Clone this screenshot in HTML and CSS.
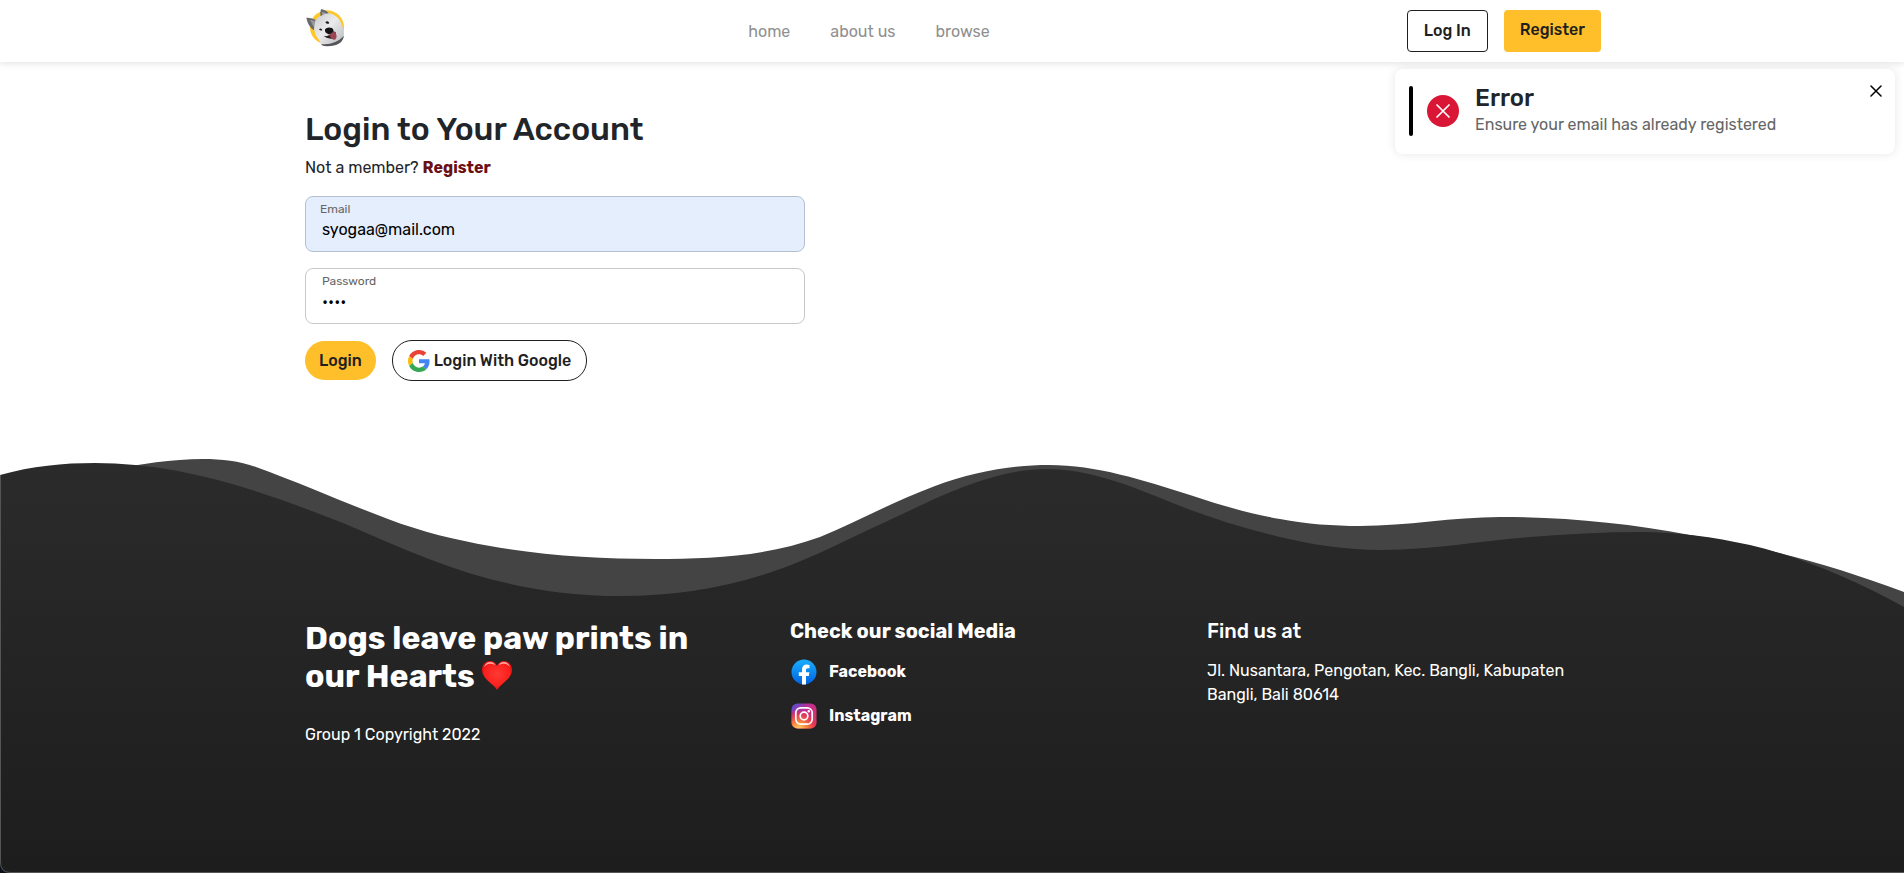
FILE: index.html
```html
<!DOCTYPE html>
<html lang="en">
<head>
<meta charset="utf-8">
<meta name="viewport" content="width=device-width, initial-scale=1">
<title>Login</title>
<link rel="stylesheet" href="styles.css">
</head>
<body>
<header class="navbar">
  <div class="container navbar-inner">
    <a class="brand" href="#" aria-label="Home">
      <svg class="brand-logo" viewBox="45 21 126 144" aria-hidden="true">
        <defs>
          <linearGradient id="fur" x1="0" y1="0" x2="1" y2="1">
            <stop offset="0" stop-color="#c9cacc"/><stop offset=".45" stop-color="#ebebed"/><stop offset="1" stop-color="#b4b5b8"/>
          </linearGradient>
        </defs>
        <circle cx="111" cy="82" r="51" fill="#fdc727"/>
        <path d="M49 53Q62 52 78 60L72 91Q54 80 49 53Z" fill="#68696c"/>
        <path d="M60 59 75 63 71 82Z" fill="#97989b"/>
        <path d="M93 27Q110 30 118 42L92 52Q89 38 93 27Z" fill="#68696c"/>
        <path d="M97 35Q107 38 111 44L96 50Z" fill="#a0a1a4"/>
        <path d="M76 62Q84 49 98 46Q112 36 128 43Q148 52 156 76Q165 98 160 112Q144 134 96 138Q88 118 77 105Q68 83 76 62Z" fill="url(#fur)"/>
        <path d="M93 132Q132 137 162 108Q157 138 112 139Q98 140 93 132Z" fill="#55565a"/>
        <path d="M106 67Q113 59 118 69Q112 75 106 67Z" fill="#161616"/>
        <path d="M87 88Q93 82 97 90Q92 94 87 88Z" fill="#161616"/>
        <path d="M105 88Q112 79 126 84Q135 92 126 99Q119 105 113 101Q104 99 105 88Z" fill="#141414"/>
        <path d="M101 109Q120 110 129 94L137 96Q139 112 128 117Q112 117 101 109Z" fill="#2c2023"/>
        <path d="M118 105Q128 94 136 97Q144 113 135 119Q125 121 118 105Z" fill="#9c4452"/>
      </svg>
    </a>
    <nav class="nav-links">
      <a href="#">home</a>
      <a href="#">about us</a>
      <a href="#">browse</a>
    </nav>
    <div class="nav-actions">
      <button class="btn btn-outline" type="button">Log In</button>
      <button class="btn btn-primary" type="button">Register</button>
    </div>
  </div>
</header>

<aside class="toast" role="alert">
  <span class="toast-bar"></span>
  <svg class="toast-icon" viewBox="0 0 32 32" aria-hidden="true">
    <circle cx="16" cy="16" r="16" fill="#d91635"/>
    <path d="M10 10 22 22M22 10 10 22" stroke="#fff" stroke-width="1.700" stroke-linecap="round"/>
  </svg>
  <div class="toast-text">
    <h2>Error</h2>
    <p>Ensure your email has already registered</p>
  </div>
  <button class="toast-close" type="button" aria-label="Close">
    <svg viewBox="0 0 12 12" aria-hidden="true"><path d="M1 1 11 11M11 1 1 11" stroke="#000" stroke-width="1.500" stroke-linecap="round"/></svg>
  </button>
</aside>

<main class="container login">
  <h1>Login to Your Account</h1>
  <p class="signup">Not a member? <a href="#">Register</a></p>
  <form class="login-form">
    <div class="field field-filled">
      <label for="email">Email</label>
      <input id="email" type="email" value="syogaa@mail.com">
    </div>
    <div class="field">
      <label for="password">Password</label>
      <input id="password" type="password" value="dogs">
    </div>
    <div class="form-actions">
      <button class="pill pill-primary" type="button">Login</button>
      <button class="pill pill-outline" type="button">
        <svg class="google" viewBox="0 0 48 48" aria-hidden="true">
          <path fill="#ea4335" d="M24 9.500c3.540 0 6.710 1.220 9.210 3.600l6.850-6.850C35.900 2.380 30.470 0 24 0 14.620 0 6.510 5.380 2.560 13.220l7.980 6.190C12.430 13.720 17.740 9.500 24 9.500z"/>
          <path fill="#4285f4" d="M46.980 24.550c0-1.570-.15-3.090-.38-4.550H24v9.020h12.940c-.58 2.960-2.260 5.480-4.780 7.180l7.730 6c4.510-4.180 7.090-10.360 7.090-17.650z"/>
          <path fill="#fbbc05" d="M10.530 28.590c-.48-1.450-.76-2.990-.76-4.590s.27-3.140.76-4.590l-7.980-6.190C.92 16.460 0 20.120 0 24c0 3.880.92 7.540 2.560 10.780l7.970-6.190z"/>
          <path fill="#34a853" d="M24 48c6.480 0 11.930-2.130 15.890-5.810l-7.730-6c-2.150 1.450-4.920 2.300-8.160 2.300-6.260 0-11.570-4.220-13.470-9.910l-7.980 6.190C6.510 42.620 14.620 48 24 48z"/>
        </svg>
        Login With Google
      </button>
    </div>
  </form>
</main>

<footer class="footer">
  <svg class="waves" viewBox="0 455 1904 418" preserveAspectRatio="none" aria-hidden="true">
    <defs>
      <linearGradient id="ground" x1="0" y1="0" x2="0" y2="1">
        <stop offset="0" stop-color="#2b2b2b"/><stop offset="1" stop-color="#1d1d1d"/>
      </linearGradient>
    </defs>
    <path fill="#444" d="M110 470C140 464 172 459 203 459C222 459 239 461 256 467C303 484 345 503 388 519C422 532 456 540 490 546C545 556 600 559 655 559C710 559 765 557 820 537C858 521 897 500 935 486C973 472 1011 465 1049 465C1096 465 1143 480 1190 495C1220 505 1250 514 1280 519C1307 524 1333 526 1360 526C1407 526 1453 517 1500 517C1563 517 1627 523 1690 535C1761 546 1833 565 1904 592V700H110Z"/>
    <path fill="#0b1119" d="M0 850H30V873H0Z"/>
    <path fill="url(#ground)" d="M0 475C32 466 63 463 95 463C149 463 204 474 258 492C286 501 315 512 343 523C372 535 400 548 429 559C493 584 556 596 620 596C681 596 742 586 803 560C825 551 846 540 868 530C889 520 909 511 930 501C969 483 1008 469 1047 469C1088 469 1129 485 1170 502C1207 517 1243 528 1280 537C1314 545 1348 550 1382 550C1431 550 1481 541 1530 537C1567 534 1603 532 1640 532C1677 532 1713 537 1750 545C1801 557 1853 579 1904 607V873H10Q0 873 0 862Z"/>
    <path fill="none" stroke="#555" d="M.5 475V862Q.5 872.500 10 872.500H1904"/>
  </svg>
  <div class="container footer-grid">
    <section>
      <h2 class="slogan">Dogs leave paw prints in our Hearts
        <svg class="heart" viewBox="0 0 30 30" role="img" aria-label="heart">
          <defs><radialGradient id="red" cx=".5" cy=".45" r=".6"><stop offset="0" stop-color="#ff3a34"/><stop offset=".7" stop-color="#fa1f1c"/><stop offset="1" stop-color="#c90d0d"/></radialGradient></defs>
          <path d="M15 29C12 23 0 18 0 9C0 3 4 0 8 0C11 0 14 2 15 5C16 2 19 0 22 0C26 0 30 3 30 9C30 18 18 23 15 29Z" fill="url(#red)"/>
          <path d="M2 6Q4 1 8 1Q12 1 13 4Q9 2 6 3Q4 4 2 6ZM17 4Q18 1 22 1Q26 1 28 6Q26 4 24 3Q21 2 17 4Z" fill="#ffa8a0"/>
        </svg>
      </h2>
      <p class="copyright">Group 1 Copyright 2022</p>
    </section>
    <section>
      <h3 class="strong">Check our social Media</h3>
      <ul class="social">
        <li><a href="#">
          <svg viewBox="-1 -1 28 28" aria-hidden="true">
            <defs><linearGradient id="fb" x1="0" y1="0" x2="0" y2="1"><stop offset="0" stop-color="#19afff"/><stop offset="1" stop-color="#0062e0"/></linearGradient></defs>
            <circle cx="13" cy="13" r="12.500" fill="url(#fb)"/>
            <path d="M11 25.400V17H7.800V13.200H11V10.600C11 7.200 13 5.600 15.800 5.600Q17.300 5.600 18.500 5.900V9.200H16.800C15.300 9.200 15 10 15 11V13.200H18.400L17.800 17H15V25.400Q13 25.700 11 25.400Z" fill="#fff"/>
          </svg>Facebook</a></li>
        <li><a href="#">
          <svg viewBox="-1 -1 28 28" aria-hidden="true">
            <defs>
              <linearGradient id="ig" x1="0" y1="0" x2="1" y2="1"><stop offset="0" stop-color="#4b50d8"/><stop offset=".4" stop-color="#c32d92"/><stop offset="1" stop-color="#e23a4e"/></linearGradient>
              <radialGradient id="glow" cx=".3" cy="1.050" r=".85"><stop offset="0" stop-color="#ffdc7a"/><stop offset=".35" stop-color="#fb8b3a"/><stop offset=".75" stop-color="#e8354f" stop-opacity=".8"/><stop offset="1" stop-color="#c32d92" stop-opacity="0"/></radialGradient>
            </defs>
            <rect x=".5" y=".5" width="25" height="25" rx="6" fill="url(#ig)"/>
            <rect x=".5" y=".5" width="25" height="25" rx="6" fill="url(#glow)"/>
            <rect x="4.800" y="4.800" width="16.400" height="16.400" rx="5" fill="none" stroke="#fff" stroke-width="1.700"/>
            <circle cx="13" cy="13" r="3.800" fill="none" stroke="#fff" stroke-width="1.700"/>
            <circle cx="17.800" cy="8.200" r="1.200" fill="#fff"/>
          </svg>Instagram</a></li>
      </ul>
    </section>
    <section>
      <h3>Find us at</h3>
      <address>Jl. Nusantara, Pengotan, Kec. Bangli, Kabupaten Bangli, Bali 80614</address>
    </section>
  </div>
</footer>
</body>
</html>
```
FILE: styles.css
```css
* {
  box-sizing: border-box;
}

body {
  margin: 0;
  min-height: 100vh;
  display: flex;
  flex-direction: column;
  background: #fff;
  color: #212529;
  font: 400 16px/24px Rubik, Roboto, "Liberation Sans", sans-serif;
}

h1, h2, h3, p, ul {
  margin: 0;
  padding: 0;
}

a {
  color: inherit;
  text-decoration: none;
}

button, input {
  font: inherit;
}

.container {
  width: 100%;
  max-width: 1322px;
  margin: 0 auto;
  padding: 0 12px 0 14px;
}

.navbar {
  background: #fff;
  box-shadow: 0 2px 6px rgba(0, 0, 0, .1);
}

.navbar-inner {
  display: flex;
  justify-content: space-between;
  align-items: center;
  height: 62px;
}

.brand-logo {
  display: block;
  width: 42px;
  height: 48px;
}

.nav-links {
  display: flex;
  gap: 40px;
  padding: 2px 16px 0 0;
  color: #8f8f8f;
}

.nav-actions {
  display: flex;
  gap: 16px;
}

.btn {
  height: 42px;
  padding: 0 16px;
  border: 1px solid #1f1f1f;
  border-radius: 4px;
  background: #fff;
  color: #1f1f1f;
  font-weight: 500;
}

.btn-primary {
  padding-bottom: 2px;
  border: 0;
  background: #ffbf2b;
}

.toast {
  position: absolute;
  top: 69px;
  right: 9px;
  display: flex;
  align-items: center;
  width: 500px;
  height: 85px;
  padding: 0 13px 2px 14px;
  border-radius: 8px;
  background: #fff;
  box-shadow: 0 0 10px rgba(0, 0, 0, .1);
}

.toast-bar {
  width: 4px;
  height: 50px;
  border-radius: 2px;
  background: #000;
}

.toast-icon {
  width: 32px;
  height: 32px;
  margin: 0 16px 0 14px;
}

.toast-text {
  flex: 1;
  color: #666;
}

.toast-text h2 {
  color: #212529;
  font-size: 24px;
  line-height: 29px;
  font-weight: 500;
}

.toast-close {
  align-self: flex-start;
  margin-top: 16px;
  padding: 0;
  border: 0;
  background: none;
  line-height: 0;
}

.toast-close svg {
  width: 12px;
  height: 12px;
}

.login {
  padding-top: 48px;
}

.login h1 {
  font-size: 32px;
  line-height: 38px;
  font-weight: 500;
}

.signup {
  margin: 8px 0 16px;
}

.signup a {
  color: #6a1014;
  font-weight: 700;
}

.login-form {
  display: flex;
  flex-direction: column;
  gap: 16px;
  width: 500px;
  max-width: 100%;
}

.field {
  display: flex;
  flex-direction: column;
  height: 56px;
  padding: 4px 16px;
  border: 1px solid #c8c8c8;
  border-radius: 8px;
  background: #fff;
}

.field-filled {
  border-color: #b3bfd3;
  background: #e5eefd;
}

.field label {
  color: #666;
  font-size: 12px;
  line-height: 17px;
}

.field-filled label {
  margin-left: -2px;
}

.field input {
  padding: 0;
  border: 0;
  outline: 0;
  background: none;
  color: #000;
  line-height: 24px;
}

.form-actions {
  display: flex;
  align-items: center;
  gap: 16px;
}

.pill {
  display: flex;
  align-items: center;
  gap: 4px;
  height: 39px;
  padding: 0 14px;
  border: 0;
  border-radius: 20px;
  background: #ffbf2b;
  color: #1f1f1f;
  font-weight: 500;
}

.pill-outline {
  height: 41px;
  padding: 0 15px;
  border: 1px solid #1f1f1f;
  background: #fff;
}

.google {
  width: 22px;
  height: 22px;
}

.footer {
  position: relative;
  flex: 1;
  margin-top: 74px;
  color: #fff;
}

.waves {
  position: absolute;
  inset: 0;
  width: 100%;
  height: 100%;
}

.footer-grid {
  position: relative;
  display: grid;
  grid-template-columns: 428px 360px 1fr;
  column-gap: 57px;
  padding-top: 164px;
}

.slogan {
  max-width: 400px;
  font-size: 32px;
  line-height: 38px;
  font-weight: 700;
}

.heart {
  width: 30px;
  height: 30px;
  vertical-align: -4px;
}

.copyright {
  margin-top: 28px;
}

.footer-grid h3 {
  font-size: 20px;
  line-height: 24px;
  font-weight: 500;
}

.footer-grid .strong {
  font-weight: 700;
}

.social {
  display: flex;
  flex-direction: column;
  gap: 16px;
  margin-top: 15px;
  list-style: none;
  font-weight: 700;
}

.social a {
  display: flex;
  align-items: center;
  gap: 11px;
}

.social svg {
  width: 28px;
  height: 28px;
}

address {
  margin-top: 16px;
  font-style: normal;
}
```
